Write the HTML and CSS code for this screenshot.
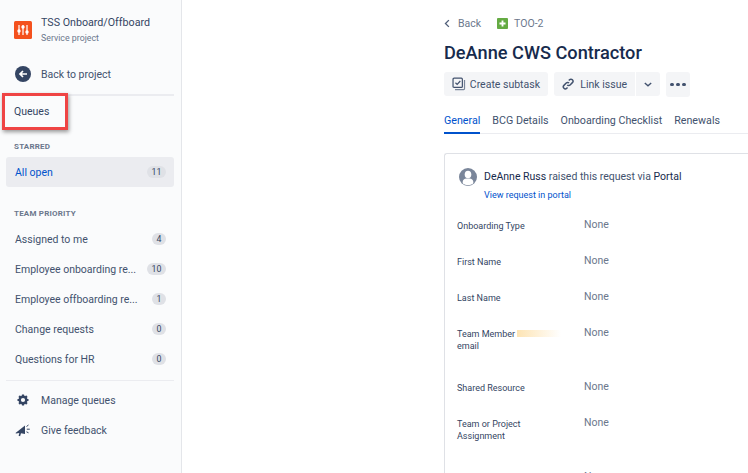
FILE: index.html
```html
<!DOCTYPE html>
<html lang="en">
<head>
<meta charset="utf-8">
<title>TOO-2</title>
<link rel="stylesheet" href="styles.css">
</head>
<body>
<div class="app">
  <aside class="sidebar">
    <div class="project">
      <svg class="project-logo" viewBox="0 0 18 18" width="18" height="18"><rect width="18" height="18" rx="1.5" fill="#f4511e"/><path d="M5 4v10M9 4v10M13 4v10" stroke="#fff" stroke-width="1.2"/><circle cx="5" cy="10" r="1.7" fill="#fff"/><circle cx="9" cy="6" r="1.7" fill="#fff"/><circle cx="13" cy="11" r="1.7" fill="#fff"/></svg>
      <div>
        <div class="project-name">TSS Onboard/Offboard</div>
        <div class="project-type">Service project</div>
      </div>
    </div>
    <div class="back-row">
      <svg class="back-icon" viewBox="0 0 16 16" width="16" height="16"><circle cx="8" cy="8" r="8" fill="#344563"/><path d="M12 8H5M8 5L5 8l3 3" fill="none" stroke="#fff" stroke-width="1.7"/></svg>
      <span>Back to project</span>
    </div>
    <hr class="divider first">
    <div class="queues-title">Queues</div>
    <div class="group-label starred">STARRED</div>
    <div class="queue active"><span class="queue-name">All open</span><span class="badge">11</span></div>
    <div class="group-label team">TEAM PRIORITY</div>
    <div class="queue"><span class="queue-name">Assigned to me</span><span class="badge">4</span></div>
    <div class="queue"><span class="queue-name">Employee onboarding re...</span><span class="badge">10</span></div>
    <div class="queue"><span class="queue-name">Employee offboarding re...</span><span class="badge">1</span></div>
    <div class="queue"><span class="queue-name">Change requests</span><span class="badge">0</span></div>
    <div class="queue"><span class="queue-name">Questions for HR</span><span class="badge">0</span></div>
    <hr class="divider second">
    <div class="tool-row">
      <svg class="tool-icon" viewBox="0 0 16 16" width="16" height="16"><circle cx="8" cy="8" r="3.3" fill="none" stroke="#344563" stroke-width="2.4"/><path d="M8 2.5v2M8 11.5v2M2.500 8h2M11.500 8h2M4.100 4.100l1.400 1.400M10.500 10.500l1.400 1.400M4.100 11.900l1.400-1.400M10.500 5.500l1.400-1.400" stroke="#344563" stroke-width="2.2"/></svg>
      <span>Manage queues</span>
    </div>
    <div class="tool-row">
      <svg class="tool-icon" viewBox="0 0 16 16" width="16" height="16"><path fill="#344563" d="M0.500 11 10 3.500v8.500l-4-.8-.9 3-1.500-.5.700-2.800L1 11.500z"/><path d="M11.500 4.500l2-1.500M11.800 7.200h3M11.500 9.800l2 1" stroke="#344563" stroke-width="1"/></svg>
      <span>Give feedback</span>
    </div>
  </aside>
  <main class="main">
    <nav class="crumbs">
      <svg class="chev-left" viewBox="0 0 8 12" width="6" height="9"><path d="M6.500 1.500 2 6l4.500 4.500" fill="none" stroke="#505f79" stroke-width="1.800"/></svg>
      <span class="crumb-back">Back</span>
      <svg class="issue-type" viewBox="0 0 12 12" width="11" height="11"><rect width="12" height="12" rx="1" fill="#65ab43"/><path d="M6 2.700v6.600M2.700 6h6.600" stroke="#fff" stroke-width="2"/></svg>
      <span class="crumb-key">TOO-2</span>
    </nav>
    <h1 class="title">DeAnne CWS Contractor</h1>
    <div class="actions">
      <div class="btn create">
        <svg viewBox="0 0 16 16" width="16" height="16"><rect x="1.200" y="1.200" width="10.800" height="10.800" rx="1.200" fill="none" stroke="#42526e" stroke-width="1.400"/><path d="M4 6.500l2 2 3.600-4" fill="none" stroke="#42526e" stroke-width="1.400"/><path d="M3.500 14.500h10a1 1 0 0 0 1-1v-10" fill="none" stroke="#7a869a" stroke-width="1.400"/></svg>
        <span>Create subtask</span>
      </div>
      <div class="btn-group">
        <div class="btn link">
          <svg viewBox="0 0 16 16" width="16" height="16"><path d="M6.800 9.200a2.600 2.600 0 0 0 3.700 0l3-3a2.600 2.600 0 0 0-3.700-3.700l-1 1M9.200 6.800a2.600 2.600 0 0 0-3.700 0l-3 3a2.600 2.600 0 0 0 3.700 3.700l1-1" fill="none" stroke="#42526e" stroke-width="1.900"/></svg>
          <span>Link issue</span>
        </div>
        <div class="btn caret"><svg viewBox="0 0 10 6" width="8" height="5"><path d="M1 1l4 3.600L9 1" fill="none" stroke="#42526e" stroke-width="1.700"/></svg></div>
      </div>
      <div class="btn more"><i></i><i></i><i></i></div>
    </div>
    <div class="tabs">
      <span class="tab selected">General</span>
      <span class="tab">BCG Details</span>
      <span class="tab">Onboarding Checklist</span>
      <span class="tab">Renewals</span>
    </div>
    <section class="card">
      <div class="requester">
        <svg class="avatar" viewBox="0 0 18 18" width="18" height="18"><circle cx="9" cy="9" r="9" fill="#7a869a"/><ellipse cx="9" cy="6.500" rx="3.300" ry="3.800" fill="#fff"/><path d="M3.700 15.500v-1.700c0-2 1.700-3.300 3.700-3.300h3.200c2 0 3.700 1.300 3.700 3.300v1.700A9 9 0 0 1 9 17.200a9 9 0 0 1-5.300-1.700z" fill="#fff"/></svg>
        <div>
          <div class="raised"><span class="dark">DeAnne Russ</span> raised this request via <span class="dark">Portal</span></div>
          <div class="portal-link">View request in portal</div>
        </div>
      </div>
      <dl class="fields">
        <div class="field"><dt>Onboarding Type</dt><dd>None</dd></div>
        <div class="field"><dt>First Name</dt><dd>None</dd></div>
        <div class="field"><dt>Last Name</dt><dd>None</dd></div>
        <div class="field tall"><dt>Team Member <span class="smudge"></span> email</dt><dd>None</dd></div>
        <div class="field"><dt>Shared Resource</dt><dd>None</dd></div>
        <div class="field tall"><dt>Team or Project Assignment</dt><dd>None</dd></div>
        <div class="field"><dt></dt><dd>None</dd></div>
      </dl>
    </section>
  </main>
</div>
<div class="callout"></div>
</body>
</html>
```
FILE: styles.css
```css
html, body { margin: 0; height: 100%; overflow: hidden; background: #fff; }
body { font-family: Roboto, "Noto Sans", sans-serif; font-size: 10.5px; color: #42526e; position: relative; }
.app { display: flex; height: 473px; overflow: hidden; }
.sidebar { width: 182px; flex: none; box-sizing: border-box; background: #fafbfc; border-right: 1px solid #e4e6ea; padding: 15px 7px 0 6px; }
.project { display: flex; align-items: center; gap: 9px; padding-left: 8px; }
.project-logo { flex: none; }
.project-name { font-size: 10.7px; line-height: 15px; color: #344563; }
.project-type { font-size: 8.8px; line-height: 14px; margin-top: 1px; color: #6b778c; }
.back-row { display: flex; align-items: center; gap: 10px; padding-left: 9px; margin-top: 20px; height: 18px; }
.back-icon { flex: none; }
.divider { border: 0; height: 1px; background: #ebecf0; margin: 0; }
.divider.first { margin-top: 11px; height: 2px; }
.queues-title { color: #344563; padding-left: 8px; line-height: 16px; margin-top: 8px; }
.group-label { font-size: 8px; font-weight: 700; color: #6b778c; padding-left: 8px; line-height: 12px; letter-spacing: .2px; }
.group-label.starred { margin-top: 21px; }
.group-label.team { margin-top: 21px; }
.queue { display: flex; align-items: center; justify-content: space-between; height: 30px; padding: 0 8px 0 9px; border-radius: 3px; }
.starred + .queue { margin-top: 4px; }
.team + .queue { margin-top: 4px; }
.queue.active { background: #ebecf0; color: #0052cc; }
.badge { background: #dfe1e6; color: #344563; font-size: 8.8px; line-height: 12px; border-radius: 7px; min-width: 5px; padding: 0 4.5px; text-align: center; }
.divider.second { margin-top: 6px; }
.tool-row { display: flex; align-items: center; gap: 10px; height: 30px; padding-left: 9px; }
.divider.second + .tool-row { margin-top: 4px; }
.tool-icon { flex: none; }
.main { flex: 1; min-width: 0; padding: 0 0 0 262px; }
.crumbs { display: flex; align-items: center; height: 14px; margin-top: 16px; font-size: 10.5px; color: #6b778c; }
.chev-left { margin-right: 8px; }
.crumb-back { margin-right: 16px; }
.issue-type { margin-right: 6px; }
.title { font-size: 18.2px; line-height: 24px; font-weight: 500; color: #172b4d; margin: 11px 0 0; }
.actions { display: flex; gap: 6px; margin-top: 7px; }
.btn { display: flex; align-items: center; gap: 4px; height: 24px; box-sizing: border-box; background: #f4f5f7; border-radius: 3px; padding: 0 8px; color: #42526e; white-space: nowrap; }
.btn.create { width: 104px; }
.btn-group { display: flex; gap: 1px; }
.btn.link { border-radius: 3px 0 0 3px; width: 81px; gap: 6px; }
.btn.caret { border-radius: 0 3px 3px 0; width: 24px; justify-content: center; padding: 0; }
.btn.more { height: 25px; gap: 2.5px; padding: 0; width: 24px; justify-content: center; }
.btn.more i { width: 3.5px; height: 3.5px; border-radius: 50%; background: #42526e; flex: none; }
.tabs { display: flex; gap: 12px; margin-top: 14px; border-bottom: 1px solid #ebecf0; height: 23px; box-sizing: border-box; font-size: 10.7px; }
.tab { line-height: 20px; color: #42526e; height: 22px; box-sizing: border-box; }
.tab.selected { color: #0052cc; border-bottom: 2px solid #0052cc; height: 23px; }
.card { box-sizing: border-box; margin-top: 19px; border: 1px solid #dfe1e6; border-right: 0; border-bottom: 0; border-radius: 3px 0 0 0; height: 400px; padding: 14px 12px 0; }
.requester { display: flex; gap: 7px; }
.avatar { flex: none; margin: 0 0 0 2px; }
.raised { font-size: 10.5px; line-height: 18px; color: #42526e; }
.dark { color: #172b4d; }
.portal-link { font-size: 9px; line-height: 14px; margin-top: 2px; color: #0052cc; }
.fields { margin: 15px 0 0; }
.field { display: grid; grid-template-columns: 127px 1fr; height: 36px; }
.field.tall { height: 54px; }
.field dt { font-size: 9px; line-height: 12px; color: #344563; padding-top: 3px; width: 108px; }
.field dd { margin: 0; padding-top: 1px; font-size: 10.5px; line-height: 14px; color: #6b778c; }
.smudge { display: inline-block; width: 44px; height: 7px; background: linear-gradient(90deg, #fde4b4, #fff); }
.callout { position: absolute; left: 2px; top: 93px; width: 66px; height: 37px; box-sizing: border-box; border: 3px solid #ef4444; box-shadow: 1px 2px 4px rgba(0,0,0,.4); }
```
